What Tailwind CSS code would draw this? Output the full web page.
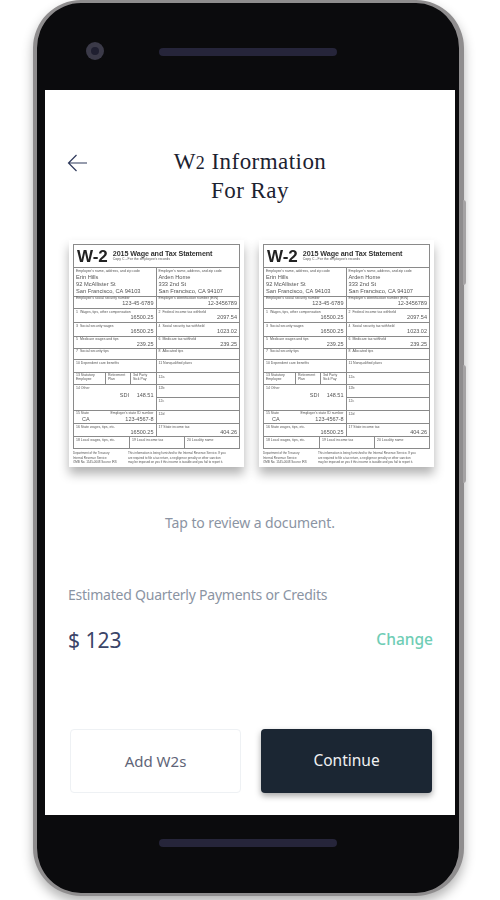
<!DOCTYPE html>
<html lang="en">
<head>
  <meta charset="UTF-8">
  <meta name="viewport" content="width=device-width, initial-scale=1.0">
  <title>W2 Information</title>
  <script src="https://cdn.jsdelivr.net/npm/@tailwindcss/browser@4"></script>
</head>
<body class="bg-white w-[500px] h-[900px] overflow-hidden font-['Noto_Sans',sans-serif]">
<div class="relative ml-[33px] w-[431px] h-[896px] rounded-[48px] bg-[#0b0b0d] border-y-[3px] border-l-4 border-r-[5px] border-[#8f8d8e] shadow-[0_6px_12px_rgba(0,0,0,0.3)]">
  <!-- side buttons -->
  <div class="absolute left-[426px] top-[197px] w-[3px] h-[85px] bg-[#a5a3a4] rounded-r-sm"></div>
  <div class="absolute left-[426px] top-[362px] w-[3px] h-[118px] bg-[#a5a3a4] rounded-r-sm"></div>

  <div class="h-[87px] relative">
    <div class="absolute left-[49px] top-[39px] w-[18px] h-[18px] rounded-full bg-[#3b3a48] flex items-center justify-center">
      <div class="w-2 h-2 rounded-full bg-[#1f1f30]"></div>
    </div>
    <div class="absolute left-[122px] top-[45px] w-[178px] h-2 rounded-full bg-[#26253a]"></div>
  </div>

  <div class="ml-2 w-[410px] h-[725px] bg-white flex flex-col">
    <div class="relative mt-[58px] h-[58px] text-center font-['Liberation_Serif',serif] text-[23px] leading-[28px] tracking-[0.45px] text-[#1c2230]">
      <svg class="absolute left-[22px] top-[5px] w-5 h-5" viewBox="0 0 20 20" fill="none" stroke="#2f3a5c" stroke-width="1.2">
        <path d="M20 10H2M9.5 2 1.5 10l8 8"/>
      </svg>
      <p>W<span class="text-[18px]">2</span> Information</p>
      <p>For Ray</p>
    </div>

    <div class="flex gap-[15px] ml-6 mt-[34px]" id="docs">
      <div class="w-[175px] h-[227px] bg-white p-1 shadow-[0_7px_10px_rgba(0,0,0,0.3)] text-[#555] leading-none font-['Liberation_Sans',sans-serif]" id="doc">
        <div class="blur-[0.45px]">
          <div class="border border-[#8a8a8a] border-b-0">
            <div class="h-[23px] border-b border-[#8a8a8a] flex items-center px-[3px] gap-[5px]">
              <span class="text-[17px] font-bold text-[#222]">W-2</span>
              <div>
                <p class="text-[7.2px] text-[#333] font-semibold tracking-[-0.1px]">2015 Wage and Tax Statement</p>
                <p class="text-[3.5px] mt-px">Copy C - For the employee's records</p>
              </div>
            </div>
            <div class="h-[29px] border-b border-[#8a8a8a] grid grid-cols-2 text-[5.7px] leading-[7px]">
              <div class="border-r border-[#8a8a8a] px-[2px]"><p class="text-[3.5px] leading-[6px]">Employee's name, address, and zip code</p><p>Erin Hills</p><p>92 McAllister St</p><p>San Francisco, CA 94103</p></div>
              <div class="px-[2px]"><p class="text-[3.5px] leading-[6px]">Employer's name, address, and zip code</p><p>Arden Home</p><p>333 2nd St</p><p>San Francisco, CA 94107</p></div>
            </div>
            <div class="h-3 border-b border-[#8a8a8a] grid grid-cols-2 text-[5.5px]">
              <div class="border-r border-[#8a8a8a] px-[2px]"><p class="text-[3.5px]">Employee's social security number</p><p class="text-right">123-45-6789</p></div>
              <div class="px-[2px]"><p class="text-[3.5px]">Employer's identification number (EIN)</p><p class="text-right">12-3456789</p></div>
            </div>
            <div class="h-[14px] border-b border-[#8a8a8a] grid grid-cols-2 text-[5.5px]">
              <div class="border-r border-[#8a8a8a] px-[2px]"><p class="text-[3.5px] leading-[6px]">1 &nbsp;Wages, tips, other compensation</p><p class="text-right">16500.25</p></div>
              <div class="px-[2px]"><p class="text-[3.5px] leading-[6px]">2 &nbsp;Federal income tax withheld</p><p class="text-right">2097.54</p></div>
            </div>
            <div class="h-[14px] border-b border-[#8a8a8a] grid grid-cols-2 text-[5.5px]">
              <div class="border-r border-[#8a8a8a] px-[2px]"><p class="text-[3.5px] leading-[6px]">3 &nbsp;Social security wages</p><p class="text-right">16500.25</p></div>
              <div class="px-[2px]"><p class="text-[3.5px] leading-[6px]">4 &nbsp;Social security tax withheld</p><p class="text-right">1023.02</p></div>
            </div>
            <div class="h-3 border-b border-[#8a8a8a] grid grid-cols-2 text-[5.5px]">
              <div class="border-r border-[#8a8a8a] px-[2px]"><p class="text-[3.5px] leading-[5px]">5 &nbsp;Medicare wages and tips</p><p class="text-right">239.25</p></div>
              <div class="px-[2px]"><p class="text-[3.5px] leading-[5px]">6 &nbsp;Medicare tax withheld</p><p class="text-right">239.25</p></div>
            </div>
            <div class="h-[11px] border-b border-[#8a8a8a] grid grid-cols-2 text-[3.5px]">
              <p class="border-r border-[#8a8a8a] px-[2px] pt-px">7 &nbsp;Social security tips</p>
              <p class="px-[2px] pt-px">8 &nbsp;Allocated tips</p>
            </div>
            <div class="h-[13px] border-b border-[#8a8a8a] grid grid-cols-2 text-[3.5px]">
              <p class="border-r border-[#8a8a8a] px-[2px] pt-[2px]">10 Dependent care benefits</p>
              <p class="px-[2px] pt-[2px]">11 Nonqualified plans</p>
            </div>
            <div class="h-3 border-b border-[#8a8a8a] grid grid-cols-2 text-[3.5px] leading-[4px]">
              <div class="border-r border-[#8a8a8a] grid grid-cols-[32px_25px_1fr]">
                <p class="border-r border-[#8a8a8a] px-[2px]">13 Statutory<br>Employee</p>
                <p class="border-r border-[#8a8a8a] px-[2px]">Retirement<br>Plan</p>
                <p class="px-[2px]">3rd Party<br>Sick Pay</p>
              </div>
              <p class="px-[2px] pt-[2px]">12a</p>
            </div>
            <div class="h-[26px] border-b border-[#8a8a8a] grid grid-cols-2 text-[3.5px]">
              <div class="border-r border-[#8a8a8a] px-[2px] pt-[2px]"><p>14 Other</p><p class="text-right text-[5.5px] mt-[2px]">SDI &nbsp;&nbsp;&nbsp; 148.51</p></div>
              <div class="flex flex-col">
                <p class="h-[13px] border-b border-[#8a8a8a] px-[2px] pt-[2px]">12b</p>
                <p class="px-[2px] pt-[2px]">12c</p>
              </div>
            </div>
            <div class="h-[13px] border-b border-[#8a8a8a] grid grid-cols-2 text-[3.5px]">
              <div class="border-r border-[#8a8a8a] px-[2px] pt-px"><p class="flex justify-between"><span>15 State</span><span>Employer's state ID number</span></p><p class="flex justify-between text-[5.5px] pl-[6px] mt-px"><span>CA</span><span>123-4567-8</span></p></div>
              <p class="px-[2px] pt-[2px]">12d</p>
            </div>
            <div class="h-[13px] border-b border-[#8a8a8a] grid grid-cols-2 text-[5.5px]">
              <div class="border-r border-[#8a8a8a] px-[2px]"><p class="text-[3.5px] leading-[6px]">16 State wages, tips, etc.</p><p class="text-right">16500.25</p></div>
              <div class="px-[2px]"><p class="text-[3.5px] leading-[6px]">17 State income tax</p><p class="text-right">404.26</p></div>
            </div>
            <div class="h-3 border-b border-[#8a8a8a] grid grid-cols-[56px_55px_1fr] text-[3.5px]">
              <p class="border-r border-[#8a8a8a] px-[2px] pt-[2px]">18 Local wages, tips, etc.</p>
              <p class="border-r border-[#8a8a8a] px-[2px] pt-[2px]">19 Local income tax</p>
              <p class="px-[2px] pt-[2px]">20 Locality name</p>
            </div>
          </div>
          <div class="grid grid-cols-[55px_1fr] mt-[2px] text-[3px] leading-[4.5px] text-[#555] whitespace-nowrap">
            <p>Department of the Treasury<br>Internal Revenue Service<br>OMB No. 1545-0008 Source IRS</p>
            <p>This information is being furnished to the Internal Revenue Service. If you<br>are required to file a tax return, a negligence penalty or other sanction<br>may be imposed on you if this income is taxable and you fail to report it.</p>
          </div>
        </div>
      </div>
    </div>

    <p class="text-center text-[#8b94a3] text-[14px] tracking-[-0.1px] leading-5 mt-[46px]">Tap to review a document.</p>

    <p class="ml-[23px] text-[#8b94a3] text-[14px] tracking-[-0.23px] leading-5 mt-[52px]">Estimated Quarterly Payments or Credits</p>

    <div class="flex items-center justify-between ml-[23px] mr-[22px] mt-[19px]">
      <span class="text-[#3a4468] text-[21px] leading-8">$ 123</span>
      <span class="text-[#6fcdb5] text-[15.5px] font-medium">Change</span>
    </div>

    <div class="flex gap-5 ml-[25px] mt-[73px]">
      <div class="w-[171px] h-[64px] rounded border border-[#eef1f4] flex items-center justify-center text-[#5f6578] text-[15px]">Add W2s</div>
      <div class="w-[171px] h-[64px] rounded bg-[#1b2633] shadow-[0_3px_6px_rgba(0,0,0,0.35)] flex items-center justify-center text-[#f0f1f2] text-[15.5px]">Continue</div>
    </div>
  </div>

  <div class="relative">
    <div class="absolute left-[122px] top-[24px] w-[178px] h-2 rounded-full bg-[#26253a]"></div>
  </div>
</div>
<script>
  // second W-2 is the same sheet
  document.getElementById("docs").appendChild(document.getElementById("doc").cloneNode(true));
</script>
</body>
</html>
